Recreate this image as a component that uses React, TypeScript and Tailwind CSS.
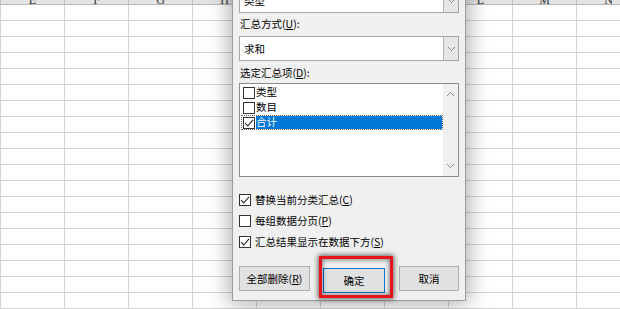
import React from "react";

const COLS = ["E", "F", "G", "H", "I", "J", "K", "L", "M", "N"];
const ROW_COUNT = 19;

const font = { fontFamily: '"Noto Sans CJK SC", "Liberation Sans", sans-serif' };

function Check({ checked }: { checked: boolean }) {
  return (
    <span className="flex h-[12px] w-[12px] shrink-0 items-center justify-center border border-[#333] bg-white">
      {checked && (
        <svg width="10" height="10" viewBox="0 0 10 10">
          <path d="M1 5.2 L3.8 8 L9 1.8" fill="none" stroke="#222" strokeWidth="1.1" />
        </svg>
      )}
    </span>
  );
}

function Chevron({ up }: { up?: boolean }) {
  return (
    <svg width="9" height="6" viewBox="0 0 9 6">
      <path d={up ? "M1 5 L4.5 1.5 L8 5" : "M1 1 L4.5 4.5 L8 1"} fill="none" stroke="#8a8a8a" strokeWidth="1" />
    </svg>
  );
}

function Combo({ value }: { value: string }) {
  return (
    <div className="flex h-[25px] border border-[#a6a6a6] bg-white">
      <div className="flex flex-1 items-center pl-[4px] text-[10.5px] text-black">{value}</div>
      <div className="flex w-[15px] items-center justify-center border-l border-[#b4b4b4] bg-[#e6e6e6]">
        <Chevron />
      </div>
    </div>
  );
}

function Label({ text, hotkey, suffix }: { text: string; hotkey: string; suffix?: string }) {
  return (
    <div className="flex h-[14px] items-center pl-[1px] text-[10.5px] leading-none text-black">
      {text}(<span className="underline">{hotkey}</span>){suffix}
    </div>
  );
}

function Sheet() {
  return (
    <div className="flex flex-col">
      {/* column headers */}
      <div className="-mt-[16px] flex h-[21px] border-b border-[#b8b8b8] bg-[#e4e4e4]">
        <div className="w-[4px] border-r border-[#c4c4c4]" />
        {COLS.map((c) => (
          <div
            key={c}
            className="flex w-[64px] shrink-0 items-end justify-center border-r border-[#c4c4c4] text-[12px] leading-none text-[#333]"
            style={{ fontFamily: '"Liberation Serif", serif' }}
          >
            <span className="translate-y-[2px]">{c}</span>
          </div>
        ))}
      </div>
      {Array.from({ length: ROW_COUNT }).map((_, r) => (
        <div key={r} className="flex h-[16px] border-b border-[#d4d4d4]">
          <div className="w-[4px] border-r border-[#d4d4d4]" />
          {COLS.map((c) => (
            <div key={c} className="w-[64px] shrink-0 border-r border-[#d4d4d4]" />
          ))}
        </div>
      ))}
    </div>
  );
}

export default function App() {
  const items = [
    { name: "类型", checked: false },
    { name: "数目", checked: false },
    { name: "合计", checked: true },
  ];
  const options = [
    { text: "替换当前分类汇总", key: "C", checked: true },
    { text: "每组数据分页", key: "P", checked: false },
    { text: "汇总结果显示在数据下方", key: "S", checked: true },
  ];

  return (
    <div className="relative h-[309px] w-[620px] overflow-hidden bg-white">
      <Sheet />

      {/* Subtotal dialog */}
      <div
        className="absolute left-[232px] top-[-38px] flex h-[339px] w-[234px] flex-col border border-[#9c9c9c] bg-[#f0f0f0] px-[6px] shadow-[0_0_20px_3px_rgba(0,0,0,0.32)]"
        style={font}
      >
        <div className="mt-[6px]">
          <Label text="分类字段" hotkey="A" suffix=":" />
        </div>
        <div className="mt-[5px]">
          <Combo value="类型" />
        </div>
        <div className="mt-[4px]">
          <Label text="汇总方式" hotkey="U" suffix=":" />
        </div>
        <div className="mt-[5px]">
          <Combo value="求和" />
        </div>
        <div className="mt-[5px]">
          <Label text="选定汇总项" hotkey="D" suffix=":" />
        </div>

        {/* list box */}
        <div className="mt-[3px] flex h-[94px] border border-[#8c8c8c] bg-white">
          <div className="flex flex-1 flex-col pl-[1px] pt-[1px]">
            {items.map((it) => (
              <div
                key={it.name}
                className={`flex h-[15px] items-center pl-[1px] ${
                  it.checked ? "border border-dotted border-[#6b5a45]" : "border border-transparent"
                }`}
              >
                <Check checked={it.checked} />
                <span
                  className={`ml-[1px] flex h-full flex-1 items-center text-[10.5px] leading-none ${
                    it.checked ? "bg-[#0078d7] text-white" : "text-black"
                  }`}
                >
                  {it.name}
                </span>
              </div>
            ))}
          </div>
          <div className="flex w-[15px] flex-col items-center justify-between bg-[#f0f0f0] py-[7px]">
            <Chevron up />
            <Chevron />
          </div>
        </div>

        {/* options */}
        <div className="mt-[15px] flex flex-col gap-[5px]">
          {options.map((o) => (
            <div key={o.key} className="flex h-[16px] items-center">
              <Check checked={o.checked} />
              <span className="ml-[4px] text-[10.5px] leading-none text-black">
                {o.text}(<span className="underline">{o.key}</span>)
              </span>
            </div>
          ))}
        </div>

        {/* buttons */}
        <div className="mt-[16px] flex h-[25px] items-stretch">
          <button className="w-[72px] border border-[#adadad] bg-[#e1e1e1] text-[10.5px] text-black">
            全部删除(<span className="underline">R</span>)
          </button>
          <div className="relative ml-[13px]">
            <button className="h-full w-[62px] border border-[#0078d7] bg-[#e1e1e1] text-[10.5px] text-black">
              确定
            </button>
            <div className="pointer-events-none absolute left-[-4px] top-[-10px] h-[42px] w-[74px] border-[3px] border-[#e8121a] shadow-[0_0_5px_1px_rgba(0,0,0,0.6),inset_0_0_4px_1px_rgba(0,0,0,0.45)]" />
          </div>
          <button className="ml-[14px] w-[61px] border border-[#adadad] bg-[#e1e1e1] text-[10.5px] text-black">
            取消
          </button>
        </div>
      </div>
    </div>
  );
}
